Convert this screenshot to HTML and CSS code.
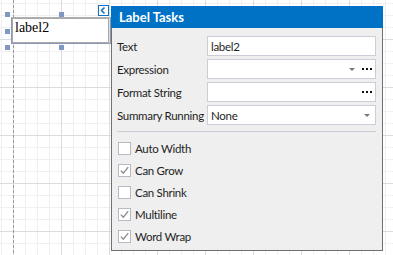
FILE: index.html
```html
<!DOCTYPE html>
<html lang="en">
<head>
  <meta charset="UTF-8">
  <meta name="viewport" content="width=device-width, initial-scale=1.0">
  <title>Label Tasks</title>
  <link rel="stylesheet" href="styles.css">
</head>
<body>

  <div class="surface">
    <div class="margin-line"></div>

    <div class="label-ctl">
      <div class="label-inner">label2</div>
    </div>
    <span class="handle h-tl"></span>
    <span class="handle h-tm"></span>
    <span class="handle h-ml"></span>
    <span class="handle h-bl"></span>
    <span class="handle h-bm"></span>

    <div class="smart-tag">
      <svg width="9" height="9" viewBox="0 0 9 9"><path d="M5.5 1.5 L2.5 4.5 L5.5 7.5" fill="none" stroke="#1470c4" stroke-width="1.6"/></svg>
    </div>

    <div class="tasks">
      <div class="tasks-header">Label Tasks</div>
      <div class="tasks-body">
        <div class="prop-row">
          <span class="prop-label">Text</span>
          <div class="field"><span class="field-text">label2</span></div>
        </div>
        <div class="prop-row">
          <span class="prop-label">Expression</span>
          <div class="field">
            <span class="field-text"></span>
            <span class="arrow"></span>
            <span class="dots"><i></i><i></i><i></i></span>
          </div>
        </div>
        <div class="prop-row">
          <span class="prop-label">Format String</span>
          <div class="field">
            <span class="field-text"></span>
            <span class="dots"><i></i><i></i><i></i></span>
          </div>
        </div>
        <div class="prop-row">
          <span class="prop-label">Summary Running</span>
          <div class="field">
            <span class="field-text">None</span>
            <span class="arrow arrow-end"></span>
          </div>
        </div>

        <div class="separator"></div>

        <div class="check-row"><span class="check"></span>Auto Width</div>
        <div class="check-row"><span class="check checked"><svg width="11" height="11" viewBox="0 0 11 11"><path d="M1.8 5.6 L4.3 8.2 L9.2 2.2" fill="none" stroke="#8a8a8a" stroke-width="1.3"/></svg></span>Can Grow</div>
        <div class="check-row"><span class="check"></span>Can Shrink</div>
        <div class="check-row"><span class="check checked"><svg width="11" height="11" viewBox="0 0 11 11"><path d="M1.8 5.6 L4.3 8.2 L9.2 2.2" fill="none" stroke="#8a8a8a" stroke-width="1.3"/></svg></span>Multiline</div>
        <div class="check-row"><span class="check checked"><svg width="11" height="11" viewBox="0 0 11 11"><path d="M1.8 5.6 L4.3 8.2 L9.2 2.2" fill="none" stroke="#8a8a8a" stroke-width="1.3"/></svg></span>Word Wrap</div>
      </div>
    </div>
  </div>

</body>
</html>
```

FILE: styles.css
```css
body {
  margin: 0;
  padding: 0;
  font-family: Lato, "Noto Sans", Arial, sans-serif;
}
.surface {
  position: relative;
  width: 393px;
  height: 255px;
  overflow: hidden;
  background-color: #fff;
  background-image:
    linear-gradient(to right, #dcdcdc 1px, transparent 1px),
    linear-gradient(to bottom, #dcdcdc 1px, transparent 1px),
    linear-gradient(to right, #efefef 1px, transparent 1px),
    linear-gradient(to bottom, #efefef 1px, transparent 1px);
  background-size: 48px 48px, 48px 48px, 12px 12px, 12px 12px;
  background-position: 13px 0, 0 39px, 1px 0, 0 3px;
}
.margin-line {
  position: absolute;
  left: 13px;
  top: 0;
  width: 1px;
  height: 255px;
  background: repeating-linear-gradient(to bottom, #9a9a9a 0 3px, transparent 3px 5px);
}

/* selected label control */
.label-ctl {
  position: absolute;
  left: 11px;
  top: 17px;
  width: 100px;
  height: 27px;
  box-sizing: border-box;
  border: 1px solid #8a98b6;
  border-top-color: #b0b0b0;
}
.label-inner {
  box-sizing: border-box;
  height: 25px;
  margin-right: 1px;
  border: 1px solid #a9a9a9;
  background: #fff;
  padding-left: 2px;
  font-family: "Liberation Serif", "Times New Roman", serif;
  font-size: 14px;
  line-height: 17px;
  color: #000;
}
.handle {
  position: absolute;
  width: 5px;
  height: 5px;
  background: #7f98c1;
}
.h-tl { left: 5px; top: 12px; }
.h-tm { left: 59px; top: 12px; }
.h-ml { left: 5px; top: 29px; }
.h-bl { left: 5px; top: 45px; }
.h-bm { left: 59px; top: 45px; }

.smart-tag {
  position: absolute;
  left: 98px;
  top: 5px;
  width: 11px;
  height: 11px;
  box-sizing: border-box;
  border: 1px solid #1470c4;
  background: #fff;
  display: flex;
  align-items: center;
  justify-content: center;
}

/* tasks popup */
.tasks {
  position: absolute;
  left: 111px;
  top: 6px;
  width: 272px;
  height: 245px;
  box-sizing: border-box;
  border: 1px solid #6f6f6f;
  border-top: none;
  background: #efefef;
  font-size: 11.5px;
  letter-spacing: -0.3px;
  color: #1e1e1e;
}
.tasks-header {
  height: 22px;
  margin: 0 -1px;
  background: #0072c6;
  color: #fff;
  font-weight: bold;
  font-size: 13px;
  letter-spacing: 0;
  line-height: 22px;
  padding-left: 8px;
}
.tasks-body {
  padding: 8px 6px 0 5px;
}
.prop-row {
  display: flex;
  align-items: center;
  height: 20px;
  margin-bottom: 3px;
}
.prop-label {
  width: 90px;
  flex-shrink: 0;
  white-space: nowrap;
}
.field {
  flex: 1;
  height: 20px;
  box-sizing: border-box;
  border: 1px solid #cdcdda;
  background: #fff;
  display: flex;
  align-items: center;
  padding: 0 3px;
}
.field-text {
  flex: 1;
}
.arrow {
  width: 0;
  height: 0;
  border-left: 3px solid transparent;
  border-right: 3px solid transparent;
  border-top: 3px solid #7a7a7a;
  margin-right: 7px;
}
.arrow-end {
  margin-right: 2px;
}
.dots {
  display: flex;
  gap: 2px;
}
.dots i {
  width: 2px;
  height: 2px;
  background: #111;
}
.separator {
  height: 1px;
  background: #cbcbd8;
  margin: 6px 0 5px;
}
.check-row {
  display: flex;
  align-items: center;
  height: 22px;
  padding-left: 1px;
}
.check {
  width: 13px;
  height: 13px;
  box-sizing: border-box;
  border: 1px solid #b9b9c6;
  background: #fff;
  margin-right: 4px;
  display: flex;
  align-items: center;
  justify-content: center;
}
```
